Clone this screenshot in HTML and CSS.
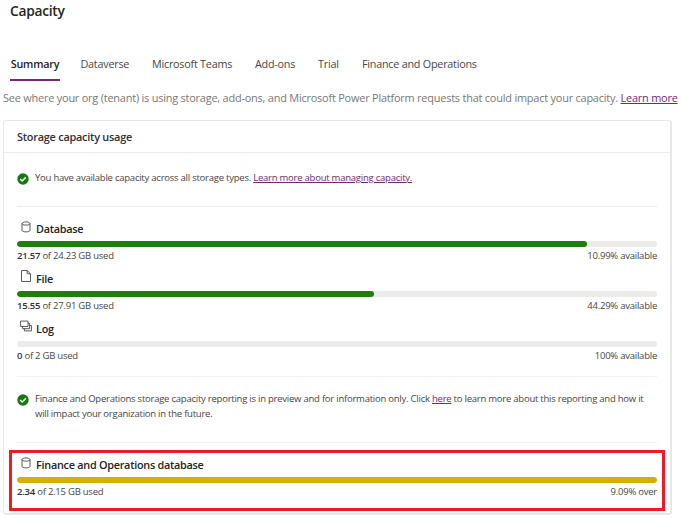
FILE: index.html
```html
<!DOCTYPE html>
<html lang="en">
<head>
<meta charset="utf-8">
<title>Capacity</title>
<link rel="stylesheet" href="styles.css">
</head>
<body>
<svg width="0" height="0" class="defs" aria-hidden="true">
  <symbol id="database" viewBox="0 0 10 12"><path d="M1 2.6v6.8c0 .8 1.6 1.5 4 1.5s4-.7 4-1.500V2.600M1 2.600c0-.9 1.600-1.700 4-1.700s4 .8 4 1.700-1.600 1.500-4 1.500-4-.6-4-1.500z"/></symbol>
  <symbol id="file" viewBox="0 0 10 12"><path d="M.5.5h5.700L9.500 3.800v7.700h-9zM6.200.5v3.300h3.300"/></symbol>
  <symbol id="log" viewBox="0 0 12 11"><path d="M.6.6h7.400v5.400H.6zM2.600 6v2.200h7V2.800H8M4.400 8.200v2.200h7V5H9.600"/></symbol>
  <symbol id="check" viewBox="0 0 12 12"><circle cx="6" cy="6" r="5.700" fill="#157a0e"/><path d="M3.200 6l2 2 3.600-3.600" stroke="#fff" stroke-width="1.500"/></symbol>
</svg>
<h1 class="title">Capacity</h1>
<nav class="tabs">
  <a class="tab active">Summary</a>
  <a class="tab dataverse">Dataverse</a>
  <a class="tab teams">Microsoft Teams</a>
  <a class="tab addons">Add-ons</a>
  <a class="tab trial">Trial</a>
  <a class="tab">Finance and Operations</a>
</nav>
<p class="intro">See where your org (tenant) is using storage, add-ons, and Microsoft Power Platform requests that could impact your capacity. <a class="link">Learn more</a></p>
<section class="card">
  <h2 class="card-title">Storage capacity usage</h2>
  <div class="notice">
    <svg class="check"><use href="#check"/></svg>
    <p>You have available capacity across all storage types. <a class="link">Learn more about managing capacity.</a></p>
  </div>
  <div class="meters">
    <div class="meter">
      <h3><svg class="icon"><use href="#database"/></svg>Database</h3>
      <div class="track"><div class="fill" style="width:89.01%"></div></div>
      <div class="caption"><span><b>21.57</b> of 24.23 GB used</span><span>10.99% available</span></div>
    </div>
    <div class="meter">
      <h3><svg class="icon"><use href="#file"/></svg>File</h3>
      <div class="track"><div class="fill" style="width:55.71%"></div></div>
      <div class="caption"><span><b>15.55</b> of 27.91 GB used</span><span>44.29% available</span></div>
    </div>
    <div class="meter">
      <h3><svg class="icon"><use href="#log"/></svg>Log</h3>
      <div class="track"></div>
      <div class="caption"><span><b>0</b> of 2 GB used</span><span>100% available</span></div>
    </div>
  </div>
  <div class="notice preview">
    <svg class="check"><use href="#check"/></svg>
    <p>Finance and Operations storage capacity reporting is in preview and for information only. Click <a class="link">here</a> to learn more about this reporting and how it<br>will impact your organization in the future.</p>
  </div>
  <div class="highlight">
    <div class="meter">
      <h3><svg class="icon"><use href="#database"/></svg>Finance and Operations database</h3>
      <div class="track"><div class="fill over"></div></div>
      <div class="caption"><span><b>2.34</b> of 2.15 GB used</span><span>9.09% over</span></div>
    </div>
  </div>
</section>
</body>
</html>
```
FILE: styles.css
```css
* { box-sizing: border-box; }
body {
  margin: 0;
  width: 681px;
  height: 519px;
  overflow: hidden;
  background: #fff;
  color: #484644;
  font-family: "Open Sans", "Noto Sans", sans-serif;
  font-size: 9.500px;
  letter-spacing: -0.235px;
}
h1, h2, h3, p { margin: 0; white-space: nowrap; }
.defs { display: block; height: 0; }
svg { fill: none; stroke-width: 0.900; flex: none; }
.title { padding: 1px 0 0 10px; height: 22px; font-size: 13.800px; line-height: 20px; letter-spacing: -0.300px; font-weight: 600; color: #252423; }
.tabs { display: flex; margin: 28px 0 0 10px; height: 31px; font-size: 10.800px; line-height: 28px; white-space: nowrap; }
.tab { width: 118px; flex: none; }
.tab.active { width: 50px; margin-right: 20.500px; text-align: center; border-bottom: 2px solid #742774; font-weight: 600; color: #252423; }
.tab.dataverse { width: 71.500px; }
.tab.teams { width: 103px; }
.tab.addons { width: 63px; }
.tab.trial { width: 44px; }
.intro { margin: 8px 0 0 3px; font-size: 10.950px; line-height: 18px; letter-spacing: -0.215px; color: #797775; }
.link { color: #742774; text-decoration: underline; text-underline-offset: 1px; }
.card { margin: 13px 0 0 3px; width: 669px; height: 395px; border: 1px solid #e8e8e8; border-right-width: 2px; border-bottom-width: 2px; border-radius: 3px; }
.card-title { height: 32px; padding-left: 13px; border-bottom: 1px solid #edebe9; font-size: 10.900px; line-height: 31px; font-weight: 600; color: #323130; }
.notice { display: flex; gap: 6px; margin: 0 13px; height: 54px; padding-top: 18px; border-bottom: 1px solid #edebe9; line-height: 14.500px; }
.check { width: 12px; height: 12px; margin-top: 2px; }
.meters { margin: 13px 13px 0; height: 157px; border-bottom: 1px solid #f3f2f1; }
.meter { height: 49.800px; }
h3 { display: flex; align-items: center; height: 21px; padding: 0 0 4px 3px; font-size: 10.850px; line-height: 17px; letter-spacing: -0.260px; font-weight: 600; color: #252423; }
.icon { width: 12px; height: 12px; margin: -4px 4px 0 0; stroke: #484644; }
.track { height: 6px; border-radius: 3px; background: #edebe9; overflow: hidden; }
.fill { height: 6px; border-radius: 3px; background: #1f7f0c; }
.fill.over { width: 100%; background: #d6b000; }
.caption { display: flex; justify-content: space-between; height: 18px; line-height: 18.500px; }
.caption b { font-weight: 600; color: #323130; }
.notice.preview { height: 66px; padding-top: 15px; border-color: #f3f2f1; }
.highlight { margin: 7px 0 0 5px; width: 656px; height: 61px; padding: 3px 5px; border: 3px solid #ed1c24; }
```
